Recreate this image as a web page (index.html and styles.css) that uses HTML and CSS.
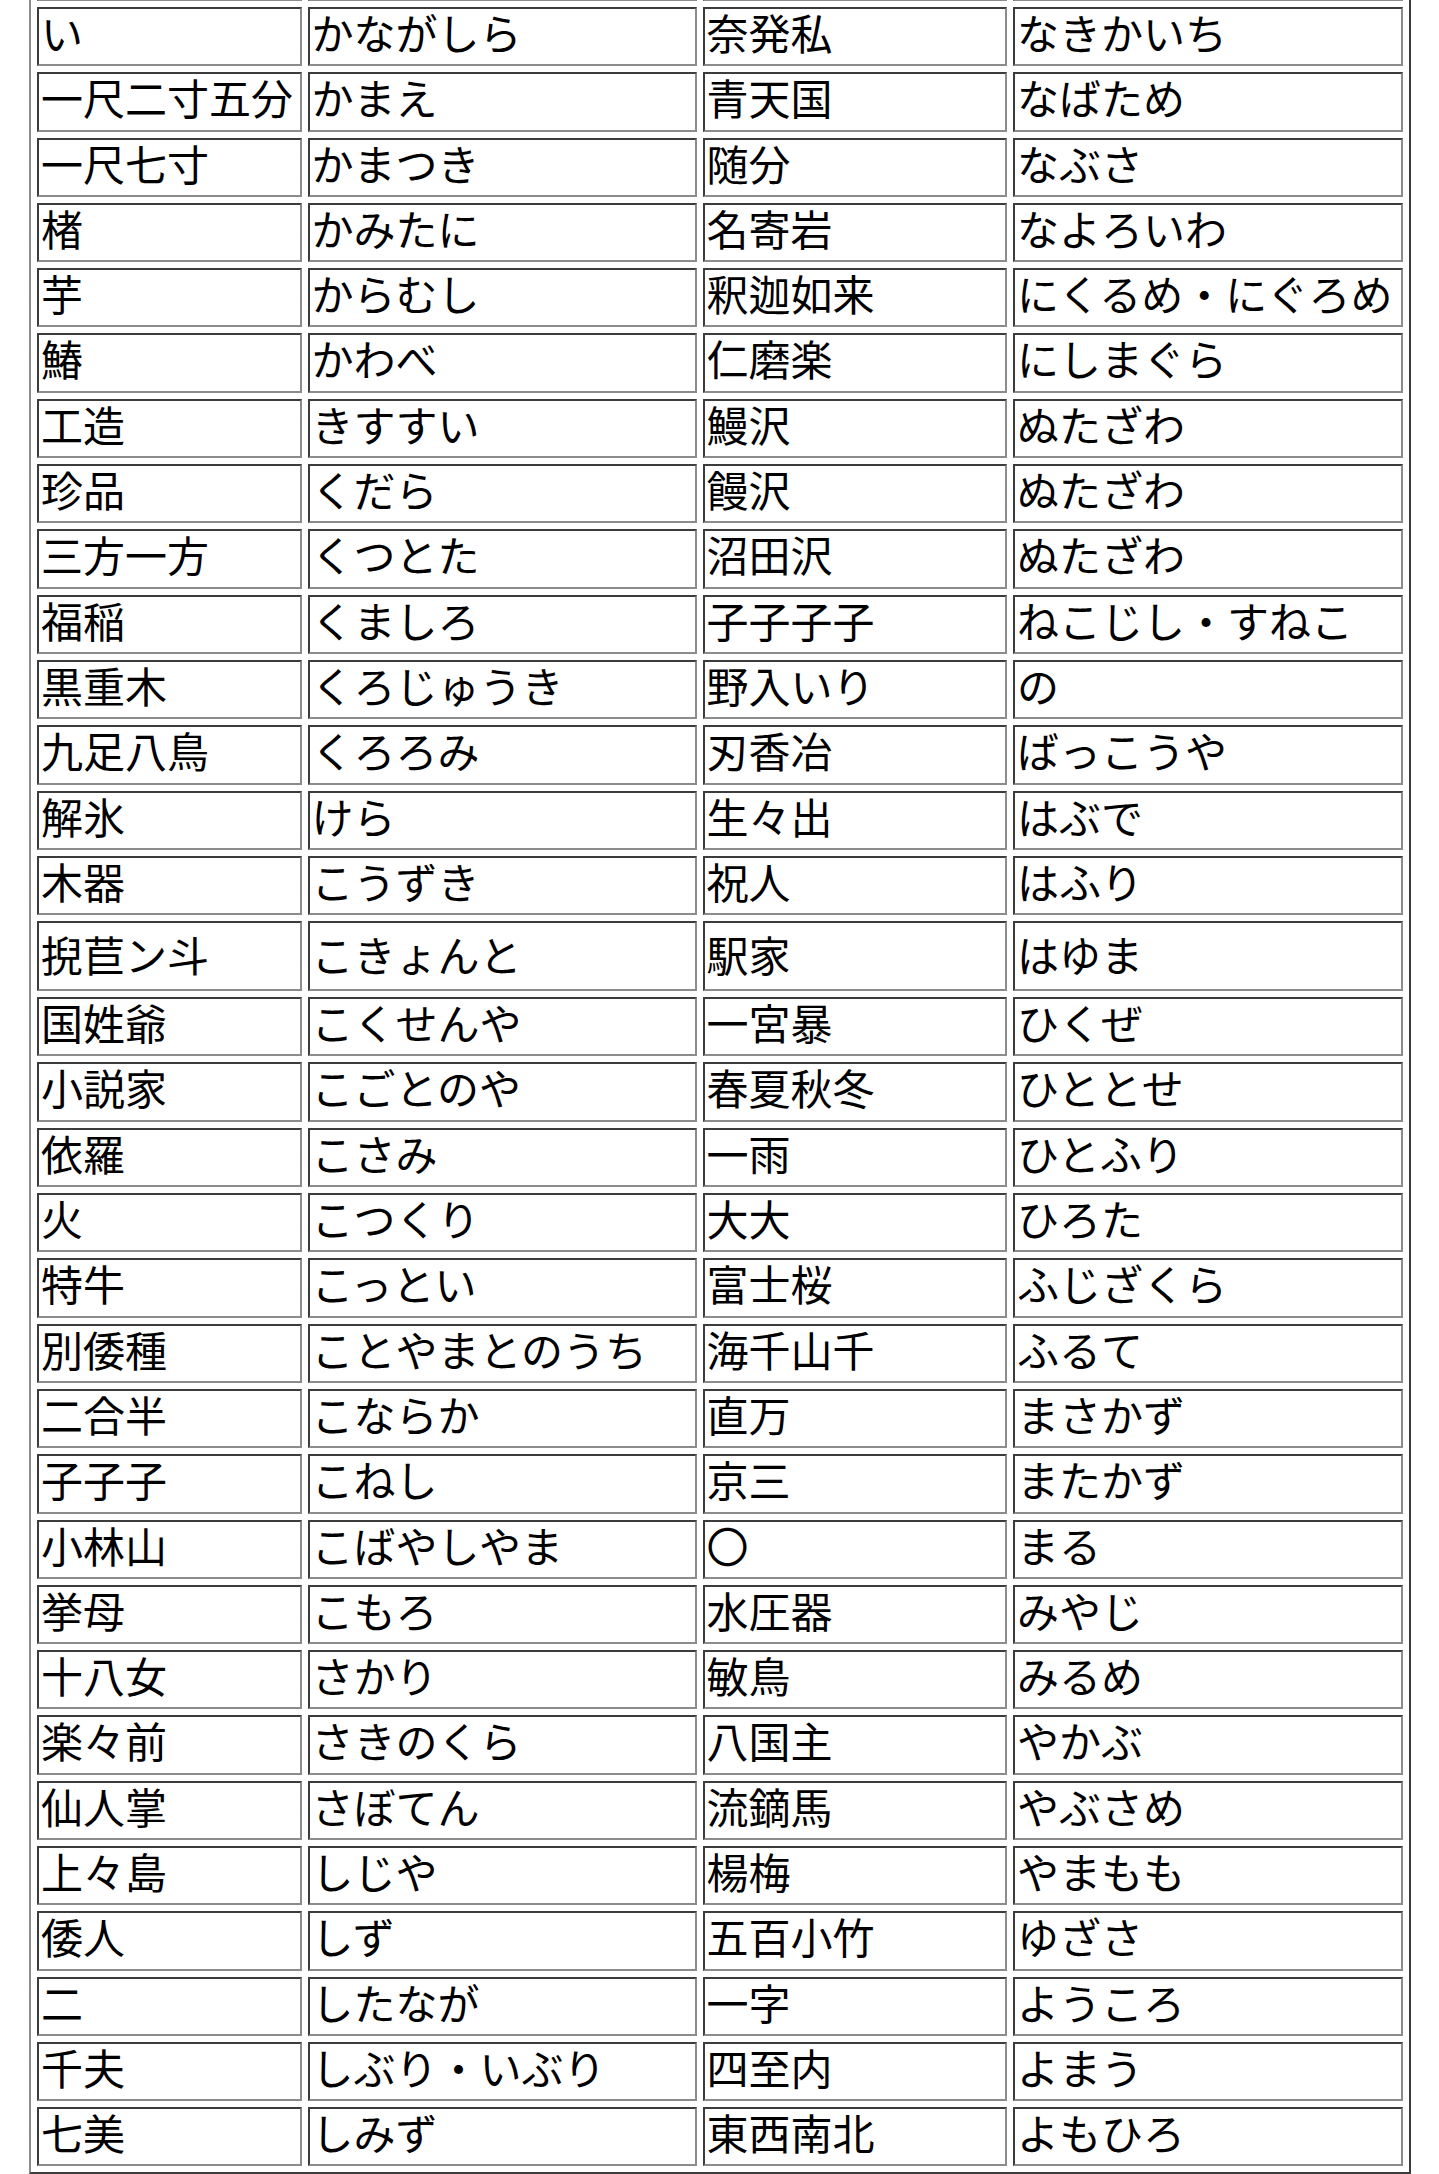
FILE: index.html
```html
<!DOCTYPE html>
<html lang="ja">
<head>
<meta charset="utf-8">
<title>難読語一覧</title>
<link rel="stylesheet" href="styles.css">
</head>
<body>
<table class="words">
<tbody>
<tr class="clipped"><td>&nbsp;</td><td>&nbsp;</td><td>&nbsp;</td><td>&nbsp;</td></tr>
<tr><td>い</td><td>かながしら</td><td>奈発私</td><td>なきかいち</td></tr>
<tr><td>一尺二寸五分</td><td>かまえ</td><td>青天国</td><td>なばため</td></tr>
<tr><td>一尺七寸</td><td>かまつき</td><td>随分</td><td>なぶさ</td></tr>
<tr><td>楮</td><td>かみたに</td><td>名寄岩</td><td>なよろいわ</td></tr>
<tr><td>芋</td><td>からむし</td><td>釈迦如来</td><td>にくるめ・にぐろめ</td></tr>
<tr><td>鰆</td><td>かわべ</td><td>仁磨楽</td><td>にしまぐら</td></tr>
<tr><td>工造</td><td>きすすい</td><td>鰻沢</td><td>ぬたざわ</td></tr>
<tr><td>珍品</td><td>くだら</td><td>饅沢</td><td>ぬたざわ</td></tr>
<tr><td>三方一方</td><td>くつとた</td><td>沼田沢</td><td>ぬたざわ</td></tr>
<tr><td>福稲</td><td>くましろ</td><td>子子子子</td><td>ねこじし・すねこ</td></tr>
<tr><td>黒重木</td><td>くろじゅうき</td><td>野入いり</td><td>の</td></tr>
<tr><td>九足八鳥</td><td>くろろみ</td><td>刃香冶</td><td>ばっこうや</td></tr>
<tr><td>解氷</td><td>けら</td><td>生々出</td><td>はぶで</td></tr>
<tr><td>木器</td><td>こうずき</td><td>祝人</td><td>はふり</td></tr>
<tr class="tall"><td>掜苣ン斗</td><td>こきょんと</td><td>駅家</td><td>はゆま</td></tr>
<tr><td>国姓爺</td><td>こくせんや</td><td>一宮暴</td><td>ひくぜ</td></tr>
<tr><td>小説家</td><td>こごとのや</td><td>春夏秋冬</td><td>ひととせ</td></tr>
<tr><td>依羅</td><td>こさみ</td><td>一雨</td><td>ひとふり</td></tr>
<tr><td>火</td><td>こつくり</td><td>大大</td><td>ひろた</td></tr>
<tr><td>特牛</td><td>こっとい</td><td>富士桜</td><td>ふじざくら</td></tr>
<tr><td>別倭種</td><td>ことやまとのうち</td><td>海千山千</td><td>ふるて</td></tr>
<tr><td>二合半</td><td>こならか</td><td>直万</td><td>まさかず</td></tr>
<tr><td>子子子</td><td>こねし</td><td>京三</td><td>またかず</td></tr>
<tr><td>小林山</td><td>こばやしやま</td><td>〇</td><td>まる</td></tr>
<tr><td>挙母</td><td>こもろ</td><td>水圧器</td><td>みやじ</td></tr>
<tr><td>十八女</td><td>さかり</td><td>敏鳥</td><td>みるめ</td></tr>
<tr><td>楽々前</td><td>さきのくら</td><td>八国主</td><td>やかぶ</td></tr>
<tr><td>仙人掌</td><td>さぼてん</td><td>流鏑馬</td><td>やぶさめ</td></tr>
<tr><td>上々島</td><td>しじや</td><td>楊梅</td><td>やまもも</td></tr>
<tr><td>倭人</td><td>しず</td><td>五百小竹</td><td>ゆざさ</td></tr>
<tr><td>二</td><td>したなが</td><td>一字</td><td>ようころ</td></tr>
<tr><td>千夫</td><td>しぶり・いぶり</td><td>四至内</td><td>よまう</td></tr>
<tr><td>七美</td><td>しみず</td><td>東西南北</td><td>よもひろ</td></tr>
</tbody>
</table>
</body>
</html>
```
FILE: styles.css
```css
html, body {
  margin: 0;
  padding: 0;
  background: #ffffff;
}

body {
  padding-left: 29px;
  font-family: "Noto Sans CJK JP", "Noto Sans", sans-serif;
  color: #000000;
}

.words {
  margin-top: -66.3px;
  table-layout: fixed;
  border-collapse: separate;
  border-spacing: 6px;
  border-style: solid;
  border-width: 2px;
  border-color: #8c8c8c #3c3c3c #3c3c3c #8c8c8c;
  width: 1382px;
}

.words td {
  box-sizing: border-box;
  border-style: solid;
  border-width: 2px;
  border-color: #3c3c3c #8c8c8c #8c8c8c #3c3c3c;
  padding: 0 2px 10px 2px;
  font-size: 42px;
  line-height: 45.3px;
  font-weight: 400;
  white-space: nowrap;
  vertical-align: middle;
  text-align: left;
}

.words td:nth-child(1) { width: 264.5px; }
.words td:nth-child(2) { width: 389px; }
.words td:nth-child(3) { width: 304.5px; }
.words td:nth-child(4) { width: 390px; }

.words .tall td {
  padding-top: 8px;
  padding-bottom: 12.7px;
}
```
